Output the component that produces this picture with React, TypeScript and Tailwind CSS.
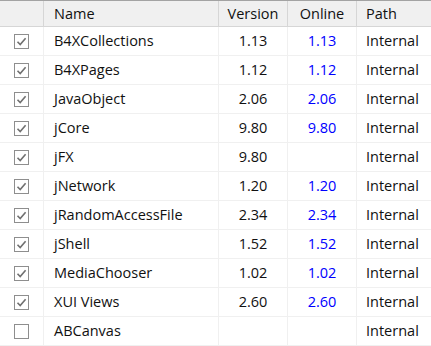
const rows = [
  { name: "B4XCollections", version: "1.13", online: "1.13", checked: true },
  { name: "B4XPages", version: "1.12", online: "1.12", checked: true },
  { name: "JavaObject", version: "2.06", online: "2.06", checked: true },
  { name: "jCore", version: "9.80", online: "9.80", checked: true },
  { name: "jFX", version: "9.80", online: "", checked: true },
  { name: "jNetwork", version: "1.20", online: "1.20", checked: true },
  { name: "jRandomAccessFile", version: "2.34", online: "2.34", checked: true },
  { name: "jShell", version: "1.52", online: "1.52", checked: true },
  { name: "MediaChooser", version: "1.02", online: "1.02", checked: true },
  { name: "XUI Views", version: "2.60", online: "2.60", checked: true },
  { name: "ABCanvas", version: "", online: "", checked: false },
];

function CheckBox({ checked }: { checked: boolean }) {
  return (
    <div className="w-[15px] h-[15px] border-[1.5px] border-[#8e8e8e] bg-white flex items-center justify-center">
      {checked && (
        <svg width="11" height="11" viewBox="0 0 11 11">
          <path d="M1.5 5.8 L4.2 8.6 L9.6 2.2" fill="none" stroke="#707070" strokeWidth="1.6" />
        </svg>
      )}
    </div>
  );
}

export default function App() {
  return (
    <div
      className="w-[431px] h-[346px] bg-white overflow-hidden text-[14.5px] text-[#111]"
      style={{ fontFamily: '"Segoe UI", "Open Sans", "Noto Sans", sans-serif' }}
    >
      <div className="grid grid-cols-[44px_175px_69px_69px_1fr] h-[27px] bg-[#f0f0f0] border-t border-[#a3a3a3] border-b border-b-[#d6d6d6]">
        <div className="border-r border-[#d6d6d6]" />
        <div className="border-r border-[#d6d6d6] pl-[10px] flex items-center">Name</div>
        <div className="border-r border-[#d6d6d6] flex items-center justify-center">Version</div>
        <div className="border-r border-[#d6d6d6] flex items-center justify-center">Online</div>
        <div className="pl-[9px] flex items-center">Path</div>
      </div>
      {rows.map((r) => (
        <div
          key={r.name}
          className="grid grid-cols-[44px_175px_69px_69px_1fr] h-[29px] border-b border-[#f0f0f0]"
        >
          <div className="border-r border-[#f0f0f0] flex items-center justify-end pr-[14px]">
            <CheckBox checked={r.checked} />
          </div>
          <div className="border-r border-[#f0f0f0] pl-[10px] flex items-center">{r.name}</div>
          <div className="border-r border-[#f0f0f0] flex items-center justify-center">{r.version}</div>
          <div className="border-r border-[#f0f0f0] flex items-center justify-center text-[#0000ff]">
            {r.online}
          </div>
          <div className="pl-[9px] flex items-center">Internal</div>
        </div>
      ))}
    </div>
  );
}
